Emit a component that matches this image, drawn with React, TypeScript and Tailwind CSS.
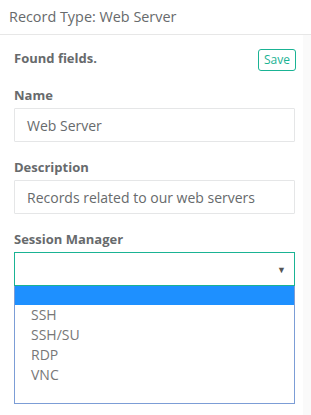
import React from "react";

export default function App() {
  const font = { fontFamily: '"Open Sans", "Liberation Sans", sans-serif' };
  return (
    <div className="flex flex-col w-[311px] h-[415px] bg-white" style={font}>
      <div className="h-[35px] shrink-0 border-b border-[#e7e7e7] pl-[9px] flex items-center">
        <span className="text-[14.4px] leading-[18px] text-[#676a6c]">Record Type: Web Server</span>
      </div>
      <div className="flex flex-1">
        <div className="w-[303px] h-full bg-white flex flex-col pl-[14px] pr-[8px]">
          <div className="mt-[14px] flex items-start justify-between h-[22px]">
            <span className="text-[13px] leading-[18px] font-bold text-[#676a6c]">Found fields.</span>
            <button className="w-[38px] h-[22px] border border-[#1ab394] rounded-[3px] text-[12px] leading-[18px] text-[#1ab394] flex items-center justify-center mr-[-1px]">
              Save
            </button>
          </div>

          <label className="mt-[15px] mb-1 text-[13px] leading-[18px] font-bold text-[#676a6c]">Name</label>
          <div className="h-[34px] border border-[#e5e6e7] rounded-[1px] pl-[12px] flex items-center text-[14px] text-[#676a6c]">
            Web Server
          </div>

          <label className="mt-4 mb-1 text-[13px] leading-[18px] font-bold text-[#676a6c]">Description</label>
          <div className="h-[34px] border border-[#e5e6e7] rounded-[1px] pl-[12px] flex items-center text-[14px] text-[#676a6c]">
            Records related to our web servers
          </div>

          <label className="mt-4 mb-1 text-[13px] leading-[18px] font-bold text-[#676a6c]">Session Manager</label>
          <div className="h-[34px] border border-[#1ab394] flex items-center justify-end pr-[8px]">
            <span className="text-[9px] leading-none text-[#555]">▼</span>
          </div>
          <div className="h-[118px] border border-[#7c9dd6] border-t-0 flex flex-col text-[14px] text-[#777]">
            <div className="h-[19px] bg-[#1e90ff]" />
            <div className="h-[20px] leading-[20px] pl-[16px]">SSH</div>
            <div className="h-[20px] leading-[20px] pl-[16px]">SSH/SU</div>
            <div className="h-[20px] leading-[20px] pl-[16px]">RDP</div>
            <div className="h-[20px] leading-[20px] pl-[16px]">VNC</div>
          </div>
        </div>
        <div className="flex-1 bg-[#fafafa]" />
      </div>
    </div>
  );
}
